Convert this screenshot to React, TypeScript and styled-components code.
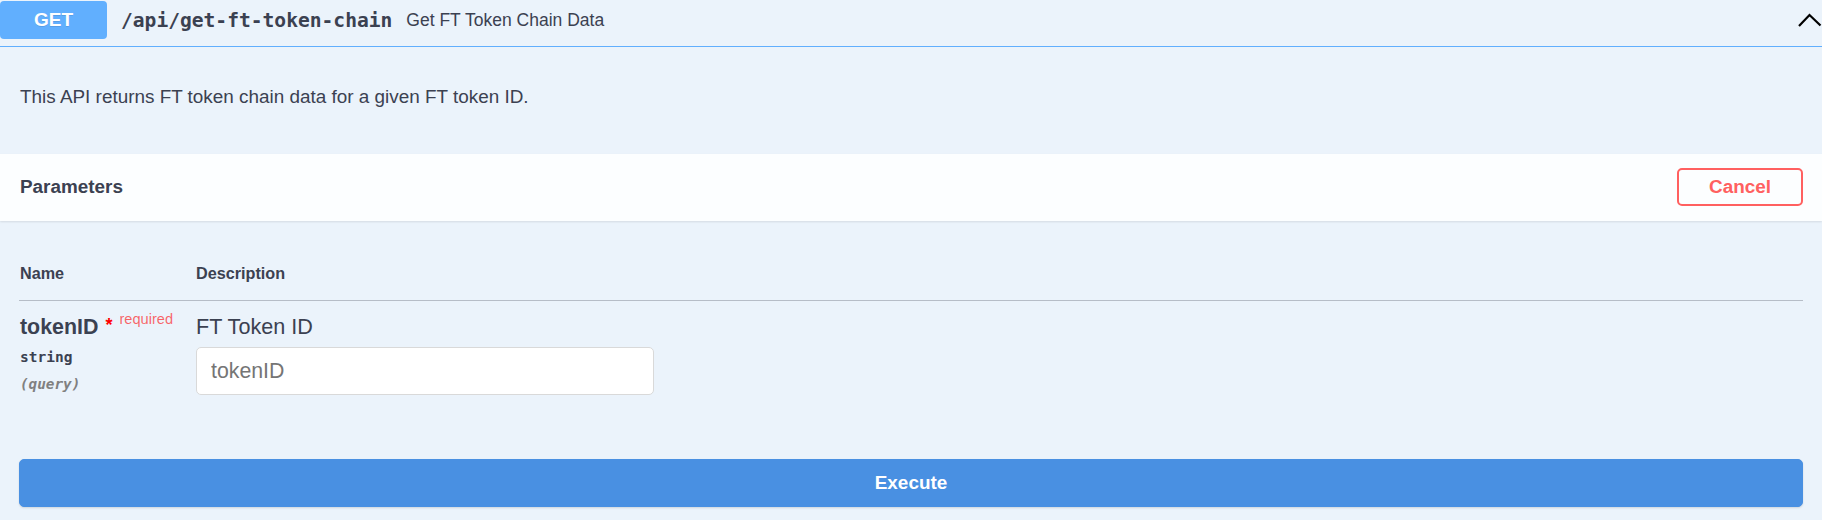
import styled, { createGlobalStyle } from "styled-components";

const GlobalStyle = createGlobalStyle`
  html, body {
    margin: 0;
    padding: 0;
    background: #ebf3fb;
  }
  body {
    font-family: "Liberation Sans", Arial, sans-serif;
    color: #3b4151;
  }
`;

const Block = styled.div`
  width: 1822px;
  height: 520px;
  background: #ebf3fb;
  overflow: hidden;
`;

const Summary = styled.div`
  display: flex;
  align-items: center;
  height: 38px;
  padding: 1px 0 7px 0;
  border-bottom: 1px solid #61affe;
`;

const Method = styled.span`
  display: flex;
  align-items: center;
  justify-content: center;
  width: 107px;
  height: 38px;
  border-radius: 4px;
  background: #61affe;
  color: #fff;
  font-size: 19px;
  font-weight: 700;
  text-shadow: 0 1px 0 rgba(0, 0, 0, 0.1);
`;

const Path = styled.span`
  margin-left: 14px;
  font-family: "DejaVu Sans Mono", monospace;
  font-size: 19.6px;
  font-weight: 700;
  color: #3b4151;
`;

const SummaryText = styled.span`
  margin-left: 14px;
  font-size: 17.5px;
  color: #3b4151;
`;

const Arrow = styled.svg`
  margin-left: auto;
  flex: none;
`;

const Description = styled.div`
  box-sizing: border-box;
  height: 107px;
  padding: 38px 20px 0;
  font-size: 18.9px;
  line-height: 24px;
`;

const SectionHeader = styled.div`
  display: flex;
  align-items: center;
  justify-content: space-between;
  height: 67px;
  padding: 0 19px 0 20px;
  background: rgba(255, 255, 255, 0.85);
  box-shadow: 0 1px 2px rgba(0, 0, 0, 0.1);
`;

const SectionTitle = styled.h4`
  margin: 0 0 2px;
  font-size: 18.9px;
  font-weight: 700;
  color: #3b4151;
`;

const Button = styled.button<{ $tone: "cancel" | "execute" }>`
  box-sizing: border-box;
  font-family: "Liberation Sans", Arial, sans-serif;
  font-size: 18.9px;
  font-weight: 700;
  border-radius: 5px;
  cursor: pointer;
  ${(p) =>
    p.$tone === "cancel"
      ? `
    width: 126px;
    height: 38px;
    margin-bottom: 1px;
    background: transparent;
    border: 2px solid #ff6060;
    color: #ff6060;
  `
      : `
    width: 100%;
    height: 48px;
    background: #4990e2;
    border: 1px solid #4990e2;
    color: #fff;
    box-shadow: 0 1px 2px rgba(0, 0, 0, 0.12);
  `}
`;

const Table = styled.div`
  padding: 0 19px;
`;

const HeadRow = styled.div`
  display: grid;
  grid-template-columns: 177px 1fr;
  padding: 42px 0 17px;
  border-bottom: 1px solid rgba(59, 65, 81, 0.3);
  font-size: 16.2px;
  line-height: 20px;
  font-weight: 700;
`;

const HeadCell = styled.div<{ $indent?: number }>`
  padding-left: ${(p) => p.$indent ?? 1}px;
`;

const ParamRow = styled.div`
  display: grid;
  grid-template-columns: 177px 1fr;
  padding-top: 13px;
`;

const NameCol = styled.div`
  padding-left: 1px;
`;

const ParamName = styled.div`
  font-size: 21.4px;
  line-height: 26px;
  font-weight: 700;
  white-space: nowrap;
`;

const Star = styled.span`
  position: relative;
  top: -3px;
  padding-left: 7px;
  color: #ff0000;
  font-size: 18px;
`;

const Required = styled.span`
  position: relative;
  top: -10px;
  padding-left: 7px;
  font-size: 14.6px;
  font-weight: 400;
  color: rgba(255, 0, 0, 0.6);
`;

const ParamType = styled.div`
  margin-top: 6px;
  font-family: "DejaVu Sans Mono", monospace;
  font-size: 14.5px;
  line-height: 18px;
  font-weight: 700;
`;

const ParamIn = styled.div`
  margin-top: 9px;
  font-family: "DejaVu Sans Mono", monospace;
  font-size: 14.3px;
  line-height: 18px;
  font-style: italic;
  font-weight: 600;
  color: #808080;
`;

const DescCol = styled.div``;

const ParamDesc = styled.div`
  font-size: 21.6px;
  line-height: 26px;
`;

const Input = styled.input`
  box-sizing: border-box;
  display: block;
  width: 458px;
  height: 48px;
  margin-top: 7px;
  padding: 0 14px;
  border: 1px solid #d9d9d9;
  border-radius: 5px;
  background: #fff;
  font-family: "Liberation Sans", Arial, sans-serif;
  font-size: 21.3px;
  color: #3b4151;
  outline: none;
  &::placeholder {
    color: #757575;
  }
`;

const ExecuteWrap = styled.div`
  padding: 64px 19px 0;
`;

export default function App() {
  return (
    <>
      <GlobalStyle />
      <Block>
        <Summary>
          <Method>GET</Method>
          <Path>/api/get-ft-token-chain</Path>
          <SummaryText>Get FT Token Chain Data</SummaryText>
          <Arrow width="24" height="14" viewBox="0 0 24 14">
            <polyline
              points="1,13 11.5,2 22.5,12.5"
              fill="none"
              stroke="#000"
              strokeWidth="2.2"
            />
          </Arrow>
        </Summary>
        <Description>
          This API returns FT token chain data for a given FT token ID.
        </Description>
        <SectionHeader>
          <SectionTitle>Parameters</SectionTitle>
          <Button $tone="cancel">Cancel</Button>
        </SectionHeader>
        <Table>
          <HeadRow>
            <HeadCell>Name</HeadCell>
            <HeadCell $indent={0}>Description</HeadCell>
          </HeadRow>
          <ParamRow>
            <NameCol>
              <ParamName>
                tokenID
                <Star>*</Star>
                <Required>required</Required>
              </ParamName>
              <ParamType>string</ParamType>
              <ParamIn>(query)</ParamIn>
            </NameCol>
            <DescCol>
              <ParamDesc>FT Token ID</ParamDesc>
              <Input placeholder="tokenID" />
            </DescCol>
          </ParamRow>
        </Table>
        <ExecuteWrap>
          <Button $tone="execute">Execute</Button>
        </ExecuteWrap>
      </Block>
    </>
  );
}
